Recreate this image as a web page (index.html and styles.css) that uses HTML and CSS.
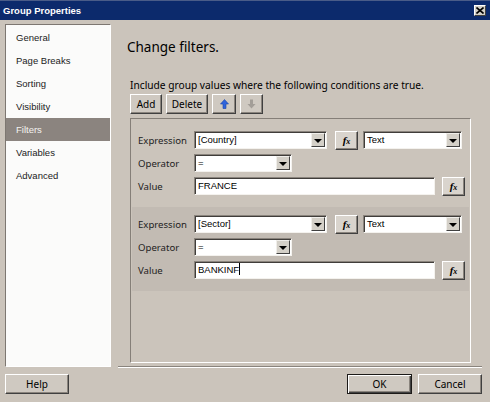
FILE: index.html
```html
<!DOCTYPE html>
<html lang="en">
<head>
    <meta charset="UTF-8">
    <title>Group Properties</title>
    <link rel="stylesheet" href="styles.css">
</head>
<body>
    <div class="window">
        <div class="titlebar">
            <span>Group Properties</span>
            <button class="close">
                <svg width="8" height="7" viewBox="0 0 8 7"><path d="M0.5 0.5 L7.5 6.5 M7.5 0.5 L0.5 6.5" stroke="#000" stroke-width="1.6"/></svg>
            </button>
        </div>

        <div class="main">
            <ul class="nav">
                <li>General</li>
                <li>Page Breaks</li>
                <li>Sorting</li>
                <li>Visibility</li>
                <li class="active">Filters</li>
                <li>Variables</li>
                <li>Advanced</li>
            </ul>

            <div class="page">
                <h1>Change filters.</h1>
                <div class="filters">
                    <p class="hint">Include group values where the following conditions are true.</p>
                    <div class="toolbar">
                        <button class="btn btn-add">Add</button>
                        <button class="btn btn-delete">Delete</button>
                        <button class="btn btn-icon">
                            <svg width="9" height="10" viewBox="0 0 9 10"><polygon points="4.5,0.5 8.5,5 6,5 6,9.5 3,9.5 3,5 0.5,5" fill="#2f64dc" stroke="#1d46a8" stroke-width="0.6"/></svg>
                        </button>
                        <button class="btn btn-icon">
                            <svg width="9" height="10" viewBox="0 0 9 10"><polygon points="4.5,9.5 8.5,5 6,5 6,0.5 3,0.5 3,5 0.5,5" fill="#a39e98"/></svg>
                        </button>
                    </div>

                    <div class="filter-list">
                        <div class="filter">
                            <div class="row">
                                <span class="label">Expression</span>
                                <div class="combo combo-expr">[Country]<i class="arrow"></i></div>
                                <button class="btn fx"><b>f</b><small>x</small></button>
                                <div class="combo combo-type">Text<i class="arrow"></i></div>
                            </div>
                            <div class="row">
                                <span class="label">Operator</span>
                                <div class="combo combo-op">=<i class="arrow"></i></div>
                            </div>
                            <div class="row">
                                <span class="label">Value</span>
                                <div class="combo combo-value">FRANCE</div>
                                <button class="btn fx fx-value"><b>f</b><small>x</small></button>
                            </div>
                        </div>

                        <div class="filter alt">
                            <div class="row">
                                <span class="label">Expression</span>
                                <div class="combo combo-expr">[Sector]<i class="arrow"></i></div>
                                <button class="btn fx"><b>f</b><small>x</small></button>
                                <div class="combo combo-type">Text<i class="arrow"></i></div>
                            </div>
                            <div class="row">
                                <span class="label">Operator</span>
                                <div class="combo combo-op">=<i class="arrow"></i></div>
                            </div>
                            <div class="row">
                                <span class="label">Value</span>
                                <div class="combo combo-value">BANKINF<span class="caret"></span></div>
                                <button class="btn fx fx-value"><b>f</b><small>x</small></button>
                            </div>
                        </div>
                    </div>
                </div>
            </div>
        </div>

        <div class="footer">
            <button class="btn btn-help">Help</button>
            <button class="btn btn-ok">OK</button>
            <button class="btn btn-cancel">Cancel</button>
        </div>
    </div>
</body>
</html>
```

FILE: styles.css
```css
body {
    margin: 0;
    font-family: 'Liberation Sans', Arial, sans-serif;
    font-size: 9.5px;
    color: #000;
}
.window {
    width: 490px;
    height: 402px;
    background-color: #cbc4bb;
    overflow: hidden;
}
.titlebar {
    height: 20px;
    background-color: #0c2a6c;
    border-top: 1px solid #4a5c88;
    box-sizing: border-box;
    color: white;
    font-weight: bold;
    font-size: 9.5px;
    display: flex;
    align-items: center;
    justify-content: space-between;
    padding: 0 4px 0 3px;
}
.close {
    width: 12px;
    height: 11px;
    padding: 0;
    background-color: #d4d0c8;
    border: 1px solid;
    border-color: #fff #404040 #404040 #fff;
    display: flex;
    align-items: center;
    justify-content: center;
}
.main {
    display: flex;
    padding: 4px 8px 0 5px;
}
.nav {
    list-style: none;
    margin: 0;
    padding: 1px 0 0 0;
    width: 106px;
    height: 343px;
    box-sizing: border-box;
    background-color: #fbfbfa;
    border: 1px solid;
    border-color: #7d7771 #fff #fff #7d7771;
    color: #222;
}
.nav li {
    height: 23px;
    line-height: 23px;
    padding-left: 10px;
}
.nav li.active {
    background-color: #8b847f;
    color: #f4f2f0;
}
.page {
    flex: 1;
    margin-left: 7px;
    border-bottom: 1px solid #8a847d;
    box-shadow: 0 1px 0 #fff;
}
.page h1 {
    margin: 0;
    padding: 14px 0 0 9px;
    font-family: 'Noto Sans', 'Open Sans', sans-serif;
    font-weight: normal;
    font-size: 13.5px;
    line-height: 18px;
}
.filters {
    margin: 22px 0 0 12px;
    width: 341px;
}
.hint {
    margin: 0;
    line-height: 14px;
    font-family: 'Noto Sans', 'Open Sans', sans-serif;
    font-size: 10.2px;
}
.toolbar {
    display: flex;
    gap: 4px;
    margin-top: 2px;
}
.btn {
    height: 20px;
    padding: 0;
    font-family: inherit;
    font-size: 9.5px;
    color: #000;
    background-color: #cfc9c1;
    border: 1px solid;
    border-color: #fff #404040 #404040 #fff;
    box-shadow: inset -1px -1px 0 #8a847d;
    display: flex;
    align-items: center;
    justify-content: center;
}
.toolbar .btn,
.footer .btn {
    font-family: 'Noto Sans', 'Open Sans', sans-serif;
    font-size: 10px;
}
.btn-add { width: 32px; }
.btn-delete { width: 42px; }
.btn-icon { width: 24px; }
.btn-icon + .btn-icon { width: 23px; }
.filter-list {
    margin-top: 4px;
    height: 245px;
    box-sizing: border-box;
    border: 1px solid;
    border-color: #857f78 #fff #fff #857f78;
    padding: 4px 1px 0 1px;
}
.filter {
    padding: 8px 0 12px 6px;
    display: flex;
    flex-direction: column;
    gap: 5px;
}
.filter.alt {
    background-color: #c2bbb3;
}
.row {
    display: flex;
    align-items: center;
    height: 18px;
}
.label {
    width: 56px;
    font-family: 'Noto Sans', 'Open Sans', sans-serif;
    font-size: 9.6px;
    color: #222;
}
.combo {
    position: relative;
    height: 18px;
    box-sizing: border-box;
    background-color: #fff;
    border: 1px solid;
    border-color: #8a847d #f4f2ee #f4f2ee #8a847d;
    box-shadow: inset 1px 1px 0 #403d3a;
    padding-left: 3px;
    line-height: 16px;
    white-space: nowrap;
}
.combo-expr { width: 133px; }
.combo-type { width: 99px; margin-left: 5px; }
.combo-op { width: 98px; }
.combo-value { width: 241px; }
.arrow {
    position: absolute;
    top: 1px;
    right: 1px;
    width: 14px;
    height: 14px;
    box-sizing: border-box;
    background-color: #d4d0c8;
    border: 1px solid;
    border-color: #f0eeea #404040 #404040 #f0eeea;
}
.arrow::after {
    content: '';
    position: absolute;
    left: 2px;
    top: 5px;
    border-left: 4px solid transparent;
    border-right: 4px solid transparent;
    border-top: 4px solid #000;
}
.caret {
    display: inline-block;
    width: 1px;
    height: 12px;
    background-color: #000;
    vertical-align: middle;
    margin-top: -2px;
}
.fx {
    width: 23px;
    height: 19px;
    margin-left: 8px;
    font-family: 'Liberation Serif', serif;
    font-style: italic;
    font-size: 11px;
    background-color: #d9d4cd;
}
.fx small {
    font-size: 8px;
    font-weight: bold;
    margin-top: 3px;
}
.fx-value {
    margin-left: 7px;
}
.footer {
    display: flex;
    padding: 0 8px 0 5px;
    margin-top: 7px;
}
.btn-help { width: 64px; }
.btn-ok {
    width: 65px;
    margin-left: auto;
    border-color: #1c1a18;
    box-shadow: inset 1px 1px 0 #fff, inset -1px -1px 0 #404040, inset -2px -2px 0 #8a847d;
}
.btn-cancel {
    width: 64px;
    margin-left: 6px;
}
```
